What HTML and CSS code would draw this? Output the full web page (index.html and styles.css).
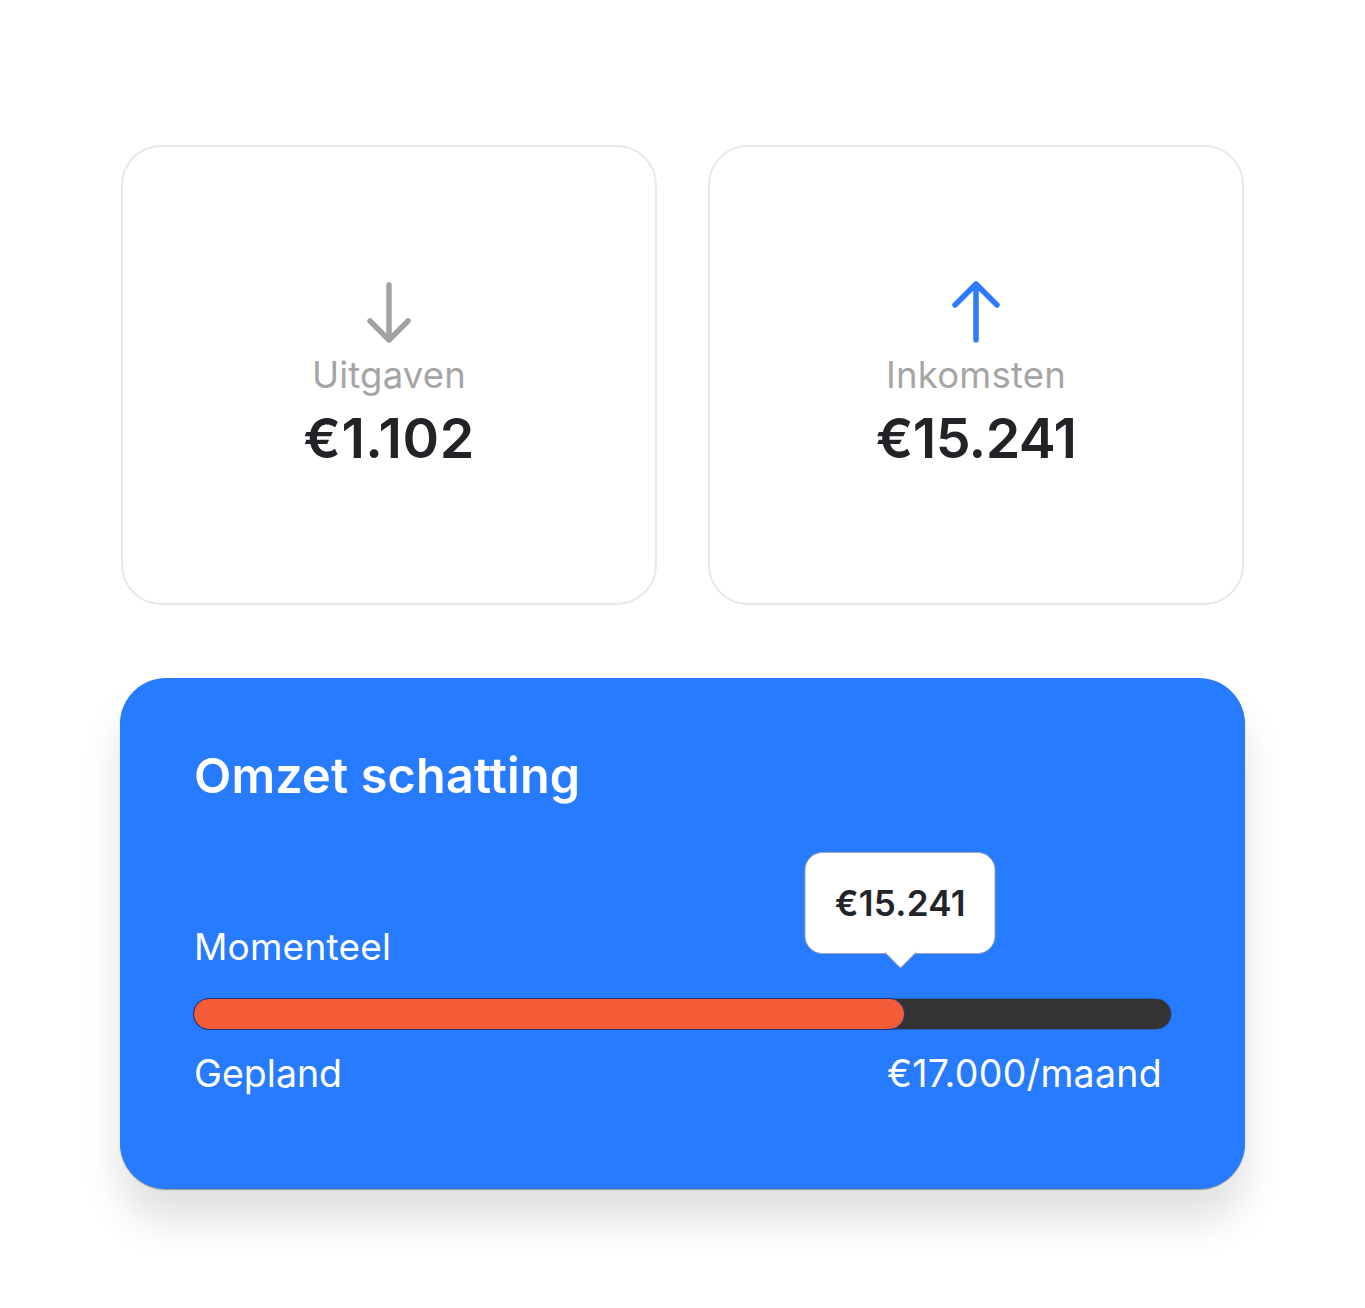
FILE: index.html
```html
<!DOCTYPE html>
<html lang="nl">
<head>
<meta charset="utf-8">
<title>Omzet</title>
<link rel="stylesheet" href="styles.css">
</head>
<body>
<main class="page">
  <section class="stats">
    <div class="stat-card">
      <svg class="stat-icon" width="48" height="64" viewBox="0 0 48 64" aria-hidden="true">
        <path d="M24 5 V60 M5 41 L24 60 L43 41" fill="none" stroke="#a2a2a2" stroke-width="5.5" stroke-linecap="round" stroke-linejoin="round"/>
      </svg>
      <div class="stat-label">Uitgaven</div>
      <div class="stat-value">€1.102</div>
    </div>
    <div class="stat-card">
      <svg class="stat-icon" width="48" height="64" viewBox="0 0 48 64" aria-hidden="true">
        <path d="M24 60 V4 M3 25 L24 4 L45 25" fill="none" stroke="#2f7bff" stroke-width="5.5" stroke-linecap="round" stroke-linejoin="round"/>
      </svg>
      <div class="stat-label">Inkomsten</div>
      <div class="stat-value stat-value-tight">€15.241</div>
    </div>
  </section>

  <section class="forecast">
    <h2 class="forecast-title">Omzet schatting</h2>
    <div class="forecast-current">Momenteel</div>
    <div class="bar">
      <div class="bar-fill" style="width: 72.7%"></div>
      <div class="bubble" style="left: 72.7%">€15.241</div>
    </div>
    <div class="forecast-foot">
      <span>Gepland</span>
      <span class="foot-amount">€17.000/maand</span>
    </div>
  </section>
</main>
</body>
</html>
```

FILE: styles.css
```css
* { box-sizing: border-box; }

html, body {
  margin: 0;
  padding: 0;
  background: #ffffff;
}

body {
  font-family: Inter, "Noto Sans", "Liberation Sans", sans-serif;
  color: #212327;
}

.page {
  width: 1125px;
  margin: 0 0 0 120px;
  padding-top: 145px;
  padding-bottom: 119px;
}

.stats {
  display: grid;
  grid-template-columns: 536px 536px;
  column-gap: 51px;
  padding-left: 1px;
}

.stat-card {
  height: 460px;
  border: 2px solid #e8e8e8;
  border-radius: 40px;
  background: #fff;
  display: flex;
  flex-direction: column;
  align-items: center;
  justify-content: center;
  padding-bottom: 0;
}

.stat-icon {
  display: block;
  margin-bottom: 9px;
}

.stat-label {
  font-size: 36.5px;
  line-height: 44px;
  color: #a5a5a5;
  font-weight: 400;
  letter-spacing: 0.2px;
}

.stat-value {
  margin-top: 9px;
  font-size: 55.5px;
  line-height: 64px;
  font-weight: 600;
  color: #212327;
  letter-spacing: 0.5px;
}

.stat-value-tight {
  letter-spacing: -0.6px;
}

.forecast {
  margin-top: 73px;
  height: 511px;
  background: #267bff;
  border-radius: 46px;
  box-shadow: 0 1px 1px rgba(0,0,0,0.35), 0 32px 40px rgba(0,0,0,0.12);
  padding: 70px 74px 0 74px;
  color: #fff;
}

.forecast-title {
  margin: 0;
  font-size: 48.5px;
  line-height: 56px;
  font-weight: 600;
  letter-spacing: 0.2px;
}

.forecast-current {
  margin-top: 121px;
  font-size: 37px;
  line-height: 44px;
  font-weight: 400;
  letter-spacing: 0.2px;
}

.bar {
  position: relative;
  margin-top: 30px;
  height: 30px;
  border-radius: 15px;
  background: #333333;
  outline: 1px solid rgba(20,20,80,0.25);
}

.bar-fill {
  height: 100%;
  border-radius: 15px;
  background: #f45b37;
  box-shadow: 0 0 0 1px #2b3a8f;
}

.bubble {
  position: absolute;
  bottom: 75px;
  transform: translateX(calc(-50% - 4px));
  width: 191px;
  height: 102px;
  background: #fff;
  border: 1px solid #9aa6b8;
  border-radius: 18px;
  color: #222428;
  font-size: 35px;
  font-weight: 600;
  display: flex;
  align-items: center;
  justify-content: center;
  letter-spacing: 0.3px;
}

.bubble::after {
  content: "";
  position: absolute;
  left: 50%;
  bottom: -11px;
  width: 22px;
  height: 22px;
  background: #fff;
  transform: translateX(-50%) rotate(45deg);
  border-radius: 2px;
  border-right: 1px solid #9aa6b8;
  border-bottom: 1px solid #9aa6b8;
}

.forecast-foot {
  margin-top: 23px;
  display: flex;
  justify-content: space-between;
  font-size: 37.5px;
  line-height: 44px;
  font-weight: 400;
}

.foot-amount {
  margin-right: 9px;
  letter-spacing: 0.3px;
}
```
